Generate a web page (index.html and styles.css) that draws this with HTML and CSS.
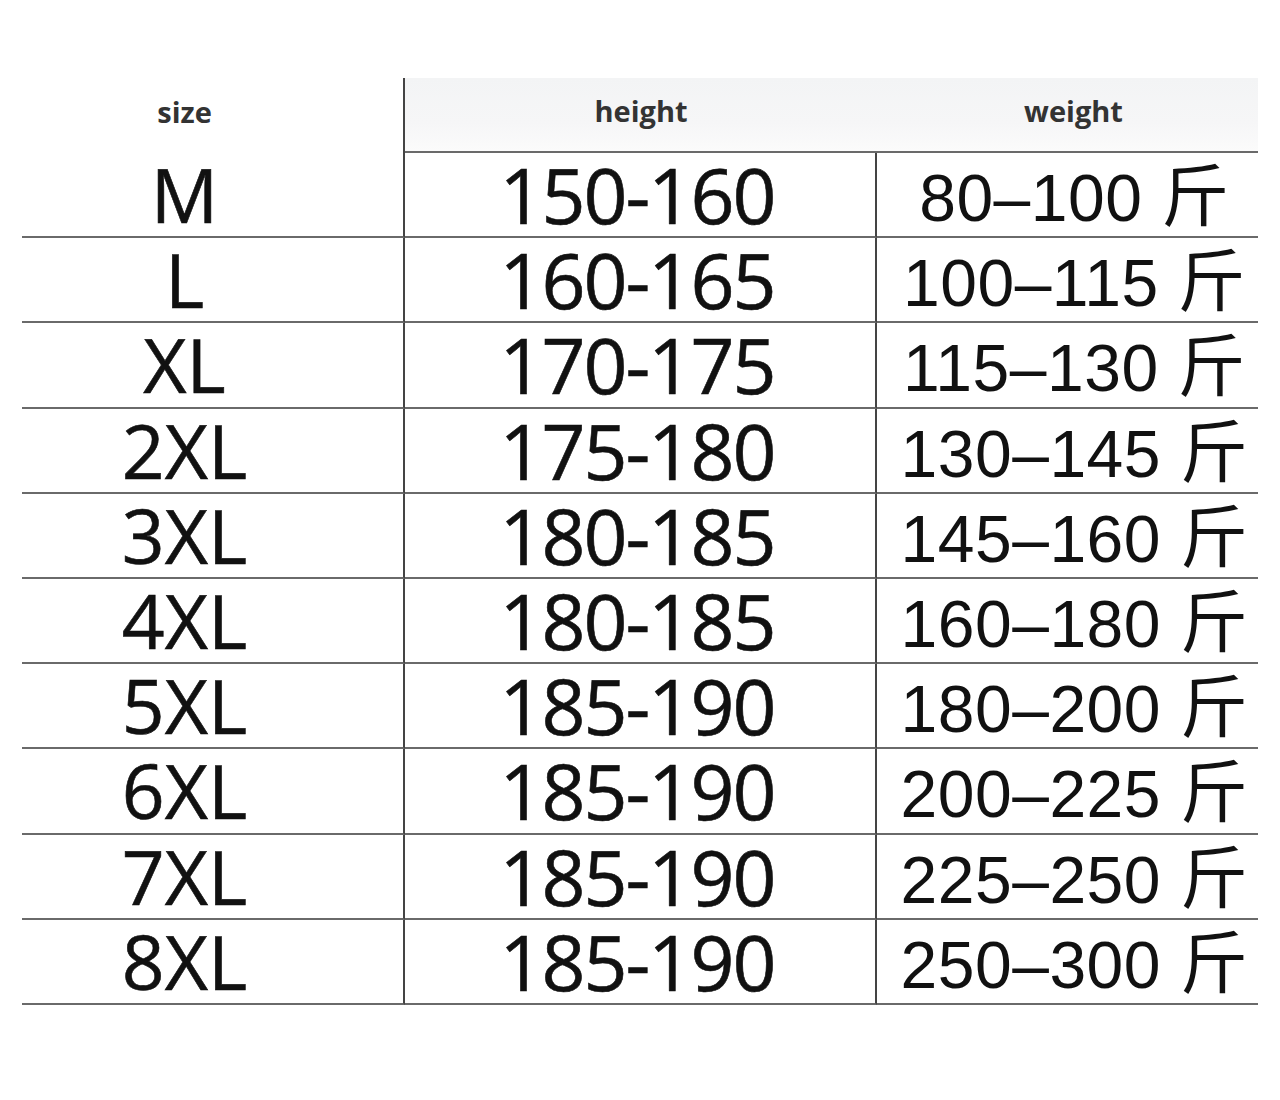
FILE: index.html
```html
<!DOCTYPE html>
<html>
<head>
<meta charset="utf-8">
<link rel="stylesheet" href="styles.css">
</head>
<body>
<div class="chart">
  <div class="cell head head-size"><span class="txt">size</span></div>
  <div class="cell head head-shade"><span class="txt">height</span></div>
  <div class="cell head head-shade head-last"><span class="txt">weight</span></div>

  <div class="cell size"><span class="txt">M</span></div><div class="cell height"><span class="txt">150-160</span></div><div class="cell weight"><span class="txt">80–100 <span class="cjk">斤</span></span></div>
  <div class="cell size"><span class="txt">L</span></div><div class="cell height"><span class="txt">160-165</span></div><div class="cell weight"><span class="txt">100–115 <span class="cjk">斤</span></span></div>
  <div class="cell size"><span class="txt">XL</span></div><div class="cell height"><span class="txt">170-175</span></div><div class="cell weight"><span class="txt">115–130 <span class="cjk">斤</span></span></div>
  <div class="cell size"><span class="txt">2XL</span></div><div class="cell height"><span class="txt">175-180</span></div><div class="cell weight"><span class="txt">130–145 <span class="cjk">斤</span></span></div>
  <div class="cell size"><span class="txt">3XL</span></div><div class="cell height"><span class="txt">180-185</span></div><div class="cell weight"><span class="txt">145–160 <span class="cjk">斤</span></span></div>
  <div class="cell size"><span class="txt">4XL</span></div><div class="cell height"><span class="txt">180-185</span></div><div class="cell weight"><span class="txt">160–180 <span class="cjk">斤</span></span></div>
  <div class="cell size"><span class="txt">5XL</span></div><div class="cell height"><span class="txt">185-190</span></div><div class="cell weight"><span class="txt">180–200 <span class="cjk">斤</span></span></div>
  <div class="cell size"><span class="txt">6XL</span></div><div class="cell height"><span class="txt">185-190</span></div><div class="cell weight"><span class="txt">200–225 <span class="cjk">斤</span></span></div>
  <div class="cell size"><span class="txt">7XL</span></div><div class="cell height"><span class="txt">185-190</span></div><div class="cell weight"><span class="txt">225–250 <span class="cjk">斤</span></span></div>
  <div class="cell size"><span class="txt">8XL</span></div><div class="cell height"><span class="txt">185-190</span></div><div class="cell weight"><span class="txt">250–300 <span class="cjk">斤</span></span></div>
</div>
</body>
</html>
```

FILE: styles.css
```css
html, body {
  margin: 0;
  padding: 0;
  background: #ffffff;
}

.chart {
  display: grid;
  grid-template-columns: 383px 472px 381px;
  grid-template-rows: 75px repeat(10, 85.2px);
  margin: 78px 0 0 22px;
  width: 1236px;
}

.cell {
  display: flex;
  align-items: center;
  justify-content: center;
  box-sizing: border-box;
  color: #111;
  white-space: nowrap;
  line-height: 1;
}

.txt {
  display: block;
  line-height: 1;
}

.head {
  font-family: "Open Sans", "Noto Sans", sans-serif;
  font-weight: 700;
  font-size: 29px;
  color: #333;
  padding-bottom: 9px;
}

.head-size {
  border-right: 2px solid #444;
  padding-right: 56px;
}

.head-shade {
  background: linear-gradient(180deg, #f3f4f5 0%, #f6f6f7 60%, #fbfbfb 100%);
  border-bottom: 2px solid #6a6a6a;
}

.head-last {
  padding-left: 12px;
}

.size, .height, .weight {
  border-bottom: 2px solid #6a6a6a;
}

.size {
  font-family: "Open Sans", "Noto Sans", sans-serif;
  font-size: 75px;
  border-right: 2px solid #444;
  padding-right: 56px;
  -webkit-text-stroke: 0.6px #111;
}

.height {
  font-family: "Open Sans", "Noto Sans", sans-serif;
  font-size: 77px;
  letter-spacing: -2px;
  border-right: 2px solid #444;
  padding-right: 6px;
  -webkit-text-stroke: 0.6px #111;
}

.weight {
  font-family: "Liberation Sans", Arial, sans-serif;
  font-size: 66px;
  letter-spacing: 0.5px;
  padding-left: 14px;
}

.cjk {
  font-family: "Noto Sans CJK SC", sans-serif;
  font-size: 68px;
  line-height: 1;
}
```
